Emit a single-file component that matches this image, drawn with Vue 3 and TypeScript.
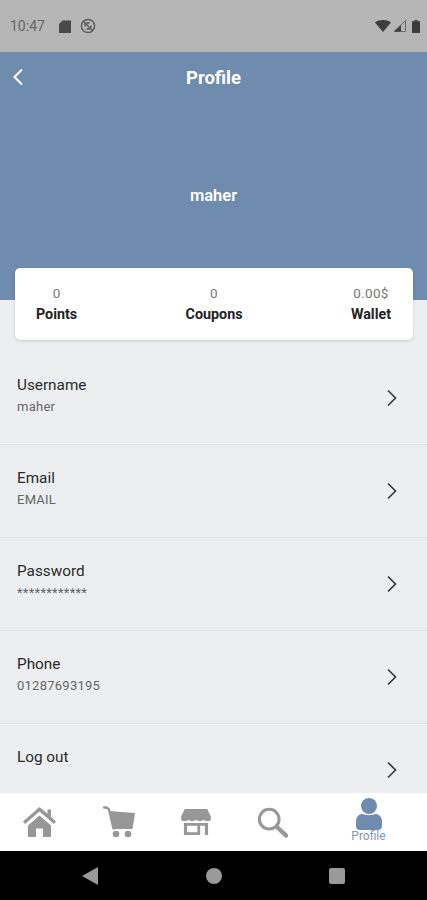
<script setup lang="ts">
interface Stat { value: string; label: string }
interface Row { label: string; value: string }
const stats: Stat[] = [
  { value: '0', label: 'Points' },
  { value: '0', label: 'Coupons' },
  { value: '0.00$', label: 'Wallet' },
]
const rows: Row[] = [
  { label: 'Username', value: 'maher' },
  { label: 'Email', value: 'EMAIL' },
  { label: 'Password', value: '************' },
  { label: 'Phone', value: '01287693195' },
  { label: 'Log out', value: '' },
]
</script>

<template>
  <div class="page">
    <div class="status">
      <span class="time">10:47</span>
      <svg class="st-ic" width="12" height="13" viewBox="0 0 12 13"><path d="M3.500 .5H12V13H0V4z" fill="#4a4a4a"/></svg>
      <svg class="st-ic ml" width="16" height="16" viewBox="0 0 16 16" fill="none" stroke="#5c5c5c" stroke-width="1.500"><circle cx="8" cy="8" r="6.600"/><path d="M3.500 3.500l9 9M5 8.500a3 3 0 0 1 4.500-3.200M11 7.500a3 3 0 0 1-4.500 3.200"/></svg>
      <span class="spacer"></span>
      <svg width="16" height="12" viewBox="0 0 16 12"><path d="M0 2.400C4.500-.8 11.500-.8 16 2.400L8 12z" fill="#3d3d3d"/></svg>
      <svg class="sig" width="13" height="12" viewBox="0 0 13 12"><path d="M12.500 .5V11.500H1z" fill="none" stroke="#6a6a6a" stroke-width="1"/><path d="M8 5V11.500H1z" fill="#3d3d3d"/></svg>
      <svg class="bat" width="8" height="13" viewBox="0 0 8 13"><path d="M2.500 0h3v1.300H8V13H0V1.300h2.500z" fill="#3d3d3d"/></svg>
    </div>

    <header class="hero">
      <div class="bar">
        <svg class="back" width="12" height="18" viewBox="0 0 12 18" fill="none" stroke="#fff" stroke-width="2"><path d="M10 1.500L2.500 9l7.500 7.500"/></svg>
        <span class="title">Profile</span>
      </div>
      <div class="name">maher</div>
    </header>

    <section class="card">
      <div v-for="s in stats" :key="s.label" class="stat">
        <span class="stat-v">{{ s.value }}</span>
        <span class="stat-l">{{ s.label }}</span>
      </div>
    </section>

    <main class="list">
      <div v-for="r in rows" :key="r.label" class="row">
        <div class="txt">
          <div class="lab">{{ r.label }}</div>
          <div class="val">{{ r.value }}</div>
        </div>
        <svg class="chev" width="12" height="18" viewBox="0 0 12 18" fill="none" stroke="#3a3a3a" stroke-width="1.700"><path d="M2 1.500L9.500 9 2 16.500"/></svg>
      </div>
    </main>

    <nav class="tabs">
      <div class="tab">
        <svg width="33" height="30" viewBox="0 0 33 30" fill="#979797"><path d="M16.500 0L0 14.500 2 17 16.500 4.500 31 17l2-2.500-5-4.500V2.500h-3.500v4.300z"/><path d="M5 18.500L16.500 8.500 28 18.500V30H20v-8.500h-7V30H5z"/></svg>
      </div>
      <div class="tab">
        <svg width="32" height="32" viewBox="0 0 32 32" fill="#979797"><path d="M1 1.500h2.500L6 3.500l4.500 19" fill="none" stroke="#979797" stroke-width="2.400" stroke-linecap="round"/><path d="M6.500 5L32 7l-2.500 16H10.500z"/><circle cx="13" cy="28" r="3.300"/><circle cx="25" cy="28" r="3.300"/></svg>
      </div>
      <div class="tab">
        <svg width="30" height="26" viewBox="0 0 32 28"><path d="M4 0h24l4 8v3c0 1.500-2 2-4 2s-3-.5-4-1.500c-1 1-3 1.500-4 1.500s-3-.5-4-1.500c-1 1-3 1.500-4 1.500s-3-.5-4-1.500C7 12.500 6 13 4 13s-4-.5-4-2V8z" fill="#979797"/><path d="M3 15h26v13H3zM6.500 18v7h11v-7zm14 0v10h5V18z" fill="#979797" fill-rule="evenodd"/></svg>
      </div>
      <div class="tab">
        <svg width="31" height="31" viewBox="0 0 33 33" fill="none" stroke="#979797"><circle cx="13" cy="13" r="10.500" stroke-width="3.200"/><path d="M21 21l10 9.500" stroke-width="4.500" stroke-linecap="round"/></svg>
      </div>
      <div class="tab active">
        <svg width="26" height="32" viewBox="0 0 26 32" fill="#6f8bad"><circle cx="13" cy="8" r="8"/><path d="M0 23.500c0-5 3-7.500 7-7.500 2 1.500 10 1.500 12 0 4 0 7 2.500 7 7.500V28c0 2.500-1.500 4-4 4H4c-2.500 0-4-1.500-4-4z"/></svg>
        <span class="tab-l">Profile</span>
      </div>
    </nav>

    <div class="sysnav">
      <svg width="16" height="18" viewBox="0 0 16 18"><path d="M16 0v18L0 9z" fill="#9a9a9a"/></svg>
      <span class="dot"></span>
      <span class="sq"></span>
    </div>
  </div>
</template>

<style scoped>
.page {
  width: 427px;
  height: 900px;
  display: flex;
  flex-direction: column;
  overflow: hidden;
  background: #edeef0;
  font-family: Roboto, "Liberation Sans", sans-serif;
  color: #222;
}
.status {
  height: 52px;
  flex: none;
  background: #b6b6b6;
  display: flex;
  align-items: center;
  padding: 0 7px 0 10px;
  box-sizing: border-box;
}
.time { font-size: 14px; color: #666; margin-right: 14px; }
.st-ic { flex: none; }
.ml { margin-left: 9px; }
.spacer { flex: 1; }
.sig { margin-left: 2px; }
.bat { margin-left: 6px; }
.hero {
  height: 248px;
  flex: none;
  background: #6f8bad;
  color: #fff;
  display: flex;
  flex-direction: column;
  align-items: center;
}
.bar {
  width: 100%;
  height: 51px;
  display: flex;
  align-items: center;
  justify-content: center;
  position: relative;
}
.back { position: absolute; left: 12px; top: 16px; }
.title { font-size: 18.500px; font-weight: 700; }
.name { font-size: 16.500px; font-weight: 600; margin-top: 83px; }
.card {
  flex: none;
  height: 72px;
  margin: -32px 14px 0 15px;
  padding: 0 22px 0 21px;
  box-sizing: border-box;
  background: #fff;
  border-radius: 5px;
  box-shadow: 0 1px 3px rgba(0,0,0,.16);
  display: flex;
  justify-content: space-between;
  align-items: center;
  position: relative;
}
.stat { display: flex; flex-direction: column; align-items: center; gap: 5px; }
.stat-v { font-size: 13.500px; line-height: 15px; color: #777; letter-spacing: .3px; }
.stat-l { font-size: 14.300px; line-height: 16px; font-weight: 700; color: #222; }
.list { flex: 1; min-height: 0; margin-top: 12px; overflow: hidden; }
.row {
  height: 93px;
  box-sizing: border-box;
  border-bottom: 1px solid #e3e4e6;
  padding: 0 29px 0 17px;
  display: flex;
  align-items: center;
  justify-content: space-between;
}
.txt { margin-top: -5px; }
.lab { font-size: 15.300px; line-height: 18px; color: #2a2a2a; }
.val { font-size: 13px; line-height: 16px; margin-top: 4.500px; color: #666; min-height: 16px; letter-spacing: .25px; }
.chev { flex: none; }
.tabs {
  height: 58px;
  flex: none;
  background: #fff;
  display: grid;
  grid-template-columns: 79px 79px 76px 76px 117px;
  align-items: center;
}
.tab { display: flex; flex-direction: column; align-items: center; justify-content: center; }
.active { margin-top: -4px; }
.tab-l { font-size: 12px; line-height: 12px; color: #8195b5; }
.sysnav {
  height: 49px;
  flex: none;
  background: #000;
  display: flex;
  align-items: center;
  justify-content: space-between;
  padding: 0 82px;
  box-sizing: border-box;
}
.dot { width: 16px; height: 16px; border-radius: 50%; background: #9a9a9a; }
.sq { width: 16px; height: 16px; border-radius: 2px; background: #9a9a9a; }
</style>
